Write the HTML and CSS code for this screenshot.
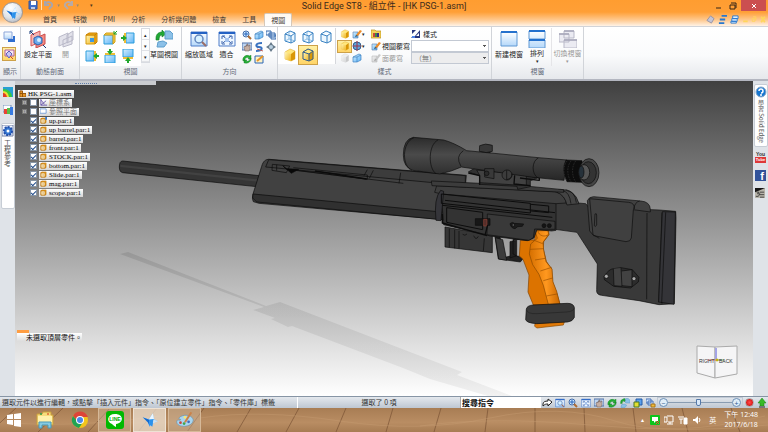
FILE: index.html
```html
<!DOCTYPE html>
<html lang="zh-Hant">
<head>
<meta charset="utf-8">
<title>Solid Edge ST8 - 組立件 - [HK PSG-1.asm]</title>
<link rel="stylesheet" href="styles.css">
</head>
<body>
<svg class="defs" aria-hidden="true">
  <defs>
    <linearGradient id="blue" x1="0" y1="0" x2="1" y2="1"><stop offset="0" stop-color="#d8f0ff"/><stop offset="1" stop-color="#5eb4f6"/></linearGradient>
    <linearGradient id="gold" x1="0" y1="0" x2="1" y2="1"><stop offset="0" stop-color="#fff6b8"/><stop offset="1" stop-color="#f0b41c"/></linearGradient>
    <linearGradient id="win" x1="0" y1="0" x2="0" y2="1"><stop offset="0" stop-color="#fff"/><stop offset="1" stop-color="#b4d8fa"/></linearGradient>
    <linearGradient id="tube" x1="0" y1="0" x2="0" y2="1"><stop offset="0" stop-color="#2b2b2b"/><stop offset=".4" stop-color="#4a4a4a"/><stop offset="1" stop-color="#262626"/></linearGradient>
    <linearGradient id="grip" x1="0" y1="0" x2="1" y2="0"><stop offset="0" stop-color="#d56f00"/><stop offset=".55" stop-color="#ff981f"/><stop offset="1" stop-color="#c86600"/></linearGradient>
    <linearGradient id="fade" gradientUnits="userSpaceOnUse" x1="0" y1="240" x2="0" y2="396"><stop offset="0" stop-color="#000" stop-opacity=".1"/><stop offset="1" stop-color="#000" stop-opacity=".05"/></linearGradient>
    <symbol id="i-view" viewBox="0 0 12 12"><path d="M1 1h8v7H1z" fill="url(#win)" stroke="#8aa4d8"/><path d="M5 8h5V5h2v6H5z" fill="#2e6ed0"/></symbol>
    <symbol id="i-show" viewBox="0 0 12 12"><path d="M2 2h9v6H2z" fill="#f8e6f2" stroke="#b05f96"/><path d="m3 6 3-3 3 3-3 4z" fill="#c9c4f4" stroke="#5f60b8"/><path d="m7 8 3 3" stroke="#d04a2c"/></symbol>
    <symbol id="i-plane" viewBox="0 0 18 18"><path d="m2 5 9-4v11l-9 4z" fill="#f7b5b2" stroke="#d35757"/><path d="m7 8 9-4v10l-9 4z" fill="#f58b82" stroke="#c84c4c"/><path d="m5 8 4-2 4 2v5l-4 2-4-2z" fill="#6aa9ec" stroke="#2b62ae"/><circle cx="10" cy="10" r="2" fill="#d5ecff"/><path d="m1 1 4 4M14 15l3 3M1 4V1h3" stroke="#173b78" fill="none"/></symbol>
    <symbol id="i-open" viewBox="0 0 18 18"><path d="m2 7 9-4v9l-9 4zM6 10l9-4v8l-9 3zM10 5l6-4v9l-6 3z" fill="#e2e2ea" stroke="#b9b9c8"/></symbol>
    <symbol id="i-box" viewBox="0 0 14 14"><path d="M1 4h9v9H1z" fill="url(#blue)" stroke="#2c9ddb"/><path d="m1 4 2-2h9l-2 2zM10 4l2-2v9l-2 2z" fill="#f4cc42" stroke="#d3a01b"/></symbol>
    <symbol id="i-gold" viewBox="0 0 14 14"><path d="M1 4h9v9H1z" fill="url(#gold)" stroke="#d79c11"/><path d="m1 4 3-2h8l-2 2zM10 4l2-2v9l-2 2z" fill="#f4ae1b" stroke="#c98200"/><path d="M5 7h4v4H5z" fill="#3d98e1"/></symbol>
    <symbol id="i-sketch" viewBox="0 0 18 18"><path d="M1 10V8c0-4 3-6 6-6V0l4 4-4 3V5C5 5 4 7 4 10z" fill="#21a735" stroke="#137d25" stroke-width=".6"/><path d="M10 1h5l3 3v5h-8zM3 12l5-1 4 2-3 4H2z" fill="#8cc1e8" stroke="#5f9fcc"/></symbol>
    <symbol id="i-area" viewBox="0 0 18 18"><path d="M1 2h16v14H1z" fill="url(#win)" stroke="#4e7cc8"/><path d="M1 3h16" stroke="#2462c4" stroke-width="2"/><circle cx="9" cy="9" r="4" fill="#d7f1ff" stroke="#6287bf" stroke-width="1.5"/><path d="m12 12 4 4" stroke="#996c66" stroke-width="2"/></symbol>
    <symbol id="i-fit" viewBox="0 0 18 18"><path d="M1 2h16v14H1z" fill="#edf6ff" stroke="#4e7cc8"/><path d="M1 3h16" stroke="#2462c4" stroke-width="2"/><path d="m5 6 8 7m0-7-8 7M4 9V6h3m4 0h3v3M4 11v3h3m4 0h3v-3" fill="none" stroke="#3d65ae"/><path d="M7 8h4v4H7z" fill="#a4c3ef"/></symbol>
    <symbol id="i-zoom" viewBox="0 0 10 10"><circle cx="4" cy="4" r="3" fill="#cfeaff" stroke="#426cab"/><path d="m6 6 3 3" stroke="#ad6d35" stroke-width="2"/><path d="M4 2v4M2 4h4" stroke="#2563bd"/></symbol>
    <symbol id="i-rotate" viewBox="0 0 10 10"><path d="M1 7C0 3 4 0 8 2l1-1v4H6l1-1C4 3 3 4 3 6zM9 4c1 3-3 6-6 5L2 9V6h3L4 7c2 1 4-1 4-2z" fill="#25ae35" stroke="#147c26" stroke-width=".4"/></symbol>
    <symbol id="i-hand" viewBox="0 0 10 10"><path d="M0 1h10v7H0z" fill="#bdd4f0" stroke="#5272a8"/><path d="M3 9 2 5l1-1 1 1V3h1v1-2h1v2h1V3h1v4L7 9z" fill="#c5aea2" stroke="#6b5b58" stroke-width=".5"/></symbol>
    <symbol id="i-layers" viewBox="0 0 10 10"><path d="M0 1h5v4H0zM3 3h6v4H3zM5 5h5v4H5z" fill="#e8f3ff" stroke="#3568ac"/></symbol>
    <symbol id="i-look" viewBox="0 0 10 10"><path d="m5 0 2 3 3 2-3 2-2 3-2-3-3-2 3-2z" fill="#667989"/><circle cx="5" cy="5" r="2" fill="#b9cfdf"/></symbol>
    <symbol id="i-wire" viewBox="0 0 14 14"><path d="m2 4 5-3 5 2v8l-4 2-6-2zM2 4l6 2 4-3M8 6v7" fill="#edf8ff" stroke="#3a82c2"/></symbol>
    <symbol id="i-wire-back" viewBox="0 0 14 14"><use href="#i-wire"/><path d="M6 2v7l-4 2m4-2 6 2" fill="none" stroke="#69a6db" stroke-width=".7"/></symbol>
    <symbol id="i-cube" viewBox="0 0 14 14"><path d="m2 4 5-3 5 2v8l-4 2-6-2z" fill="#ffe77c" stroke="#d9a020" stroke-width=".5"/><path d="m8 6 4-3v8l-4 2z" fill="#d99707"/><path d="m2 4 6 2v7l-6-2z" fill="url(#gold)"/></symbol>
    <symbol id="i-edge" viewBox="0 0 14 14"><use href="#i-cube"/><path d="m2 4 5-3 5 2v8l-4 2-6-2zM2 4l6 2 4-3M8 6v7" fill="none" stroke="#315f91"/></symbol>
    <symbol id="i-globe" viewBox="0 0 10 10"><circle cx="5" cy="5" r="4" fill="#5ca8df" stroke="#34618e"/><path d="M5 0v10M1 5h8" stroke="#9e344b"/></symbol>
    <symbol id="i-brush" viewBox="0 0 10 10"><path d="M1 3h5v6H1z" fill="url(#blue)" stroke="#5579aa" stroke-width=".6"/><path d="m4 6 4-5 2 1-4 5z" fill="#ed8c29"/><path d="m3 8 1-2 2 1z" fill="#345"/></symbol>
    <symbol id="i-persp" viewBox="0 0 10 10"><path d="m1 4 6-3 2 1v5L5 9H1z" fill="url(#blue)" stroke="#3f82c2" stroke-width=".7"/><path d="M1 4h4l4-2M5 4v5" fill="none" stroke="#3f82c2" stroke-width=".7"/></symbol>
    <symbol id="i-colors" viewBox="0 0 10 10"><path d="M0 1h4l1 1h5v7H0z" fill="#f3d35a" stroke="#b98d1b" stroke-width=".7"/><path d="M2 4h2v4H2z" fill="#c8433b"/><path d="M4 4h2v4H4z" fill="#448740"/><path d="M6 4h2v4H6z" fill="#382b88"/></symbol>
    <symbol id="i-style" viewBox="0 0 10 10"><path d="M1 1h4L1 5zM4 7l5-6v8H0l2-2z" fill="#28357c"/><path d="m6 6 2-2v3H5z" fill="#fff"/><path d="M1 7h3v2H1z" fill="#4e83e8"/></symbol>
    <symbol id="i-window" viewBox="0 0 18 18"><path d="M1 2h16v14H1z" fill="url(#win)" stroke="#6099d4"/><path d="M1 2h16" stroke="#2471cd" stroke-width="2"/></symbol>
    <symbol id="i-tile" viewBox="0 0 18 18"><path d="M1 1h16v8H1zM1 10h16v8H1z" fill="url(#win)" stroke="#6099d4"/><path d="M1 1h16M1 10h16" stroke="#2471cd" stroke-width="2"/></symbol>
    <symbol id="i-switch" viewBox="0 0 18 18"><path d="M5 1h10v7H5zM0 4h10v8H0zM5 10h13v8H5z" fill="#ebebf2" stroke="#b9b9c8"/><path d="M5 1h10M0 4h10M5 10h13" stroke="#a7a7b9" stroke-width="1.5"/></symbol>
    <symbol id="i-part" viewBox="0 0 8 8"><path d="M1 2h5v5H1z" fill="#fff3c7" stroke="#b96c00"/><path d="m1 2 1-1h5v5L6 7V2z" fill="#efa624" stroke="#bd7100" stroke-width=".5"/><path d="M3 4h1v1H3z" fill="#a34a00"/></symbol>
    <symbol id="i-mark" viewBox="0 0 32 26"><path d="M3 8l11 4 7-11 2 10 7 4-9 4-6 6-3-8z" fill="#80c6ff"/><path d="m3 8 11 4 2 13-4-8z" fill="#146bd0"/><path d="m14 12 7-11 2 10-6 7z" fill="#e9f5ff"/><path d="m14 12 9-1-3 14-5-4z" fill="#2a91eb"/><path d="m22 12 8 3-9 4z" fill="#d2e0ed"/></symbol>
    <symbol id="i-palette" viewBox="0 0 20 18"><path d="M3 7c4-5 14-4 16 1 1 5-5 8-10 8-6 0-9-3-8-6 1-2 2 0 4-1 1-1-2-1-2-2z" fill="#a9d5ef" stroke="#6991aa" stroke-width=".7"/><circle cx="5" cy="12" r="1.5" fill="#cb443a"/><circle cx="9" cy="13" r="1.5" fill="#41a54a"/><circle cx="14" cy="11" r="1.5" fill="#416bc0"/><circle cx="10" cy="6" r="1.5" fill="#ffe766"/><path d="m9 11 7-11 2 1-7 11z" fill="#cb824a"/></symbol>
  </defs>
</svg>

<header class="titlebar">
  <button class="orb" aria-label="應用程式功能表"><svg viewBox="0 0 32 26"><use href="#i-mark"/></svg></button>
  <div class="caption">
    <div class="quick">
      <button aria-label="儲存"><svg viewBox="0 0 10 10"><path d="M1 1h8v8H1z" fill="#3f6ec8" stroke="#31539d"/><path d="M3 1h5v4H3z" fill="#fff"/><path d="M3 7h4v2H3z" fill="#bdcce9"/></svg></button>
      <button class="undo" aria-label="復原"><svg viewBox="0 0 10 10"><path d="M1 1v4h4M1 5c2-5 8-3 7 1L5 9" fill="none" stroke="#a8a5ac" stroke-width="2"/></svg></button>
      <span>▾</span>
      <button aria-label="重做"><svg viewBox="0 0 10 10"><path d="M9 1v4H5M9 5C7 0 1 2 2 6l3 3" fill="none" stroke="#b8aaa6" stroke-width="2"/></svg></button>
      <span>▾</span><span class="more">▾</span>
    </div>
    <h1>Solid Edge ST8 - 組立件 - [HK PSG-1.asm]</h1>
    <div class="window-buttons">
      <button aria-label="最小化"><svg viewBox="0 0 8 8"><path d="M1 6h5" stroke="#332516"/></svg></button>
      <button aria-label="還原"><svg viewBox="0 0 8 8"><path d="M1 3h5v4H1zM2 1h5v5" fill="none" stroke="#332516"/></svg></button>
      <button class="close" aria-label="關閉"><svg viewBox="0 0 8 8"><path d="m2 2 4 4m0-4L2 6" stroke="#fff"/></svg></button>
    </div>
  </div>
  <nav class="tabs">
    <a href="#">首頁</a><a href="#">特徵</a><a href="#">PMI</a><a href="#">分析</a><a href="#">分析幾何體</a><a href="#">檢查</a><a href="#">工具</a><a class="active" href="#">視圖</a>
    <div class="doc-buttons">
      <svg viewBox="0 0 10 10"><path d="m1 6 4-5 4 3-3 5z" fill="#c4c4d5" stroke="#9292a8"/></svg>
      <svg viewBox="0 0 10 10"><path d="M4 1h6M2 5h6M1 9h6" stroke="#2878cf" stroke-width="2"/></svg>
      <svg viewBox="0 0 10 10"><path d="M3 1h6v3H3zM2 4h6v3H2zM1 7h6v2H1z" fill="#dceeff" stroke="#2878cf"/></svg>
      <svg class="slim" viewBox="0 0 6 10"><path d="M1 7h5" stroke="#ffd65c" stroke-width="2"/></svg>
      <svg class="slim" viewBox="0 0 6 10"><path d="M1 4h3v3H1zM2 2h3v4" fill="none" stroke="#ffd65c"/></svg>
      <svg class="slim" viewBox="0 0 6 10"><path d="m1 2 4 6m0-6L1 8" stroke="#ffd65c" stroke-width="2"/></svg>
    </div>
  </nav>
</header>

<section class="ribbon" aria-label="視圖">
  <div class="group g-show">
    <div class="tools stack">
      <button class="mini" aria-label="視圖"><svg><use href="#i-view"/></svg></button>
      <button class="mini chosen" aria-label="顯示"><svg><use href="#i-show"/></svg></button>
    </div>
    <h2>顯示</h2>
  </div>
  <div class="group g-section">
    <div class="tools">
      <button class="big"><svg><use href="#i-plane"/></svg>設定平面</button>
      <button class="big off"><svg><use href="#i-open"/></svg>開</button>
    </div>
    <h2>動態剖面</h2>
  </div>
  <div class="group g-views">
    <div class="tools">
      <div class="gallery">
        <button aria-label="等角視圖"><svg viewBox="0 0 14 14"><use href="#i-gold"/></svg></button>
        <button aria-label="俯視圖"><svg viewBox="0 0 14 14"><path d="M1 4h9v9H1z" fill="url(#blue)" stroke="#2c9ddb"/><path d="m1 4 2-2h9l-2 2zM10 4l2-2v9l-2 2z" fill="#f4cc42" stroke="#d3a01b"/><path d="m14 0-3 3m0-3v3h3" stroke="#22a82e" fill="none"/></svg></button>
        <button aria-label="左視圖"><svg viewBox="0 0 14 14"><path d="M5 2h8v10H5z" fill="url(#blue)" stroke="#2c9ddb"/><path d="M4 2v10" stroke="#efbd36" stroke-width="2"/><path d="M0 6h2V4l4 3-4 3V8H0z" fill="#22a82e"/></svg></button>
        <button aria-label="右視圖"><svg viewBox="0 0 14 14"><path d="M1 2h8v10H1z" fill="url(#blue)" stroke="#2c9ddb"/><path d="M10 2v10" stroke="#efbd36" stroke-width="2"/><path d="M14 6h-2V4L8 7l4 3V8h2z" fill="#22a82e"/></svg></button>
        <button aria-label="前視圖"><svg viewBox="0 0 14 14"><path d="M2 6h10v8H2z" fill="url(#blue)" stroke="#2c9ddb"/><path d="M2 5h10" stroke="#efbd36" stroke-width="2"/><path d="M6 0h2v2h2L7 6 4 2h2z" fill="#22a82e"/></svg></button>
        <button aria-label="底視圖"><svg viewBox="0 0 14 14"><path d="M2 0h10v8H2z" fill="url(#blue)" stroke="#2c9ddb"/><path d="M2 9h10" stroke="#efbd36" stroke-width="2"/><path d="m7 8 3 4H8v2H6v-2H4z" fill="#22a82e"/></svg></button>
      </div>
      <div class="scroller"><button aria-label="上一列">▴</button><button aria-label="下一列">▾</button><button aria-label="更多">▾</button></div>
      <button class="big"><svg><use href="#i-sketch"/></svg>草圖視圖</button>
    </div>
    <h2>視圖</h2>
  </div>
  <div class="group g-orient">
    <div class="tools">
      <button class="big"><svg><use href="#i-area"/></svg>縮放區域</button>
      <button class="big"><svg><use href="#i-fit"/></svg>適合</button>
      <div class="small-grid">
        <button aria-label="縮放"><svg><use href="#i-zoom"/></svg></button>
        <button aria-label="塗彩"><svg><use href="#i-persp"/></svg></button>
        <button aria-label="視圖方向"><svg><use href="#i-layers"/></svg></button>
        <button aria-label="平移"><svg><use href="#i-hand"/></svg></button>
        <button aria-label="上一視圖"><svg viewBox="0 0 10 10"><path d="M8 1C1 1 1 5 5 5s4 4-3 4" fill="none" stroke="#3972c0" stroke-width="2"/><path d="m3 7 6 2" stroke="#bd6260"/></svg></button>
        <button aria-label="正視面"><svg><use href="#i-look"/></svg></button>
        <button aria-label="旋轉"><svg><use href="#i-rotate"/></svg></button>
        <button aria-label="儲存視圖"><svg viewBox="0 0 10 10"><path d="M1 2h8v7H1z" fill="#fff2c4" stroke="#2b66b8"/><path d="m3 7 6-5" stroke="#e89526" stroke-width="2"/></svg></button>
      </div>
    </div>
    <h2>方向</h2>
  </div>
  <div class="group g-style">
    <div class="tools">
      <div class="cubes">
        <button aria-label="線框"><svg><use href="#i-wire-back"/></svg></button>
        <button aria-label="隱藏邊線"><svg><use href="#i-wire-back"/></svg></button>
        <button aria-label="可見邊線"><svg><use href="#i-wire"/></svg></button>
        <button aria-label="塗彩"><svg><use href="#i-cube"/></svg></button>
        <button class="chosen" aria-label="帶邊線塗彩"><svg><use href="#i-edge"/></svg></button>
      </div>
      <div class="render">
        <button aria-label="陰影"><svg><use href="#i-cube"/></svg></button>
        <button aria-label="邊線色彩"><svg><use href="#i-brush"/></svg></button><i>▾</i>
        <button class="wide" aria-label="色彩管理"><svg><use href="#i-colors"/></svg></button>
        <button class="chosen" aria-label="落影"><svg><use href="#i-cube"/></svg></button>
        <button aria-label="銳化"><svg><use href="#i-globe"/></svg></button><i>▾</i>
        <button class="wide"><svg><use href="#i-brush"/></svg>視圖覆寫</button>
        <button class="gray" aria-label="反射"><svg><use href="#i-cube"/></svg></button>
        <button aria-label="透視"><svg><use href="#i-persp"/></svg></button><i></i>
        <button class="wide off"><svg class="gray"><use href="#i-brush"/></svg>面覆寫</button>
      </div>
      <div class="style-fields">
        <label for="style"><svg><use href="#i-style"/></svg>樣式</label>
        <select id="style"><option></option></select>
        <select aria-label="面覆寫" disabled><option>（無）</option></select>
      </div>
    </div>
    <h2>樣式</h2>
  </div>
  <div class="group g-window">
    <div class="tools">
      <button class="big"><svg><use href="#i-window"/></svg>新建視窗</button>
      <button class="big drop"><svg><use href="#i-tile"/></svg>排列<i>▾</i></button>
      <button class="big drop off"><svg><use href="#i-switch"/></svg>切換視窗<i>▾</i></button>
    </div>
    <h2>視窗</h2>
  </div>
</section>

<main class="workspace">
  <aside class="rail left">
    <button aria-label="色彩"><svg viewBox="0 0 10 10"><path d="M0 0h10v10H0z" fill="#279fd2"/><path d="M0 2q8 0 9 8H0z" fill="#39ca3d"/><path d="M0 4q5 0 6 6H0z" fill="#f2db37"/><path d="M0 6q3 0 4 4H0z" fill="#df3c28"/></svg></button>
    <button aria-label="模擬"><svg viewBox="0 0 10 10"><path d="M0 0h8v7H0z" fill="#fff" stroke="#7290ba"/><path d="M1 4h3v5H1z" fill="#ea4435"/><path d="M4 3h3v6H4z" fill="#5abf4a"/><path d="M7 2h3v8H7z" fill="#387be0"/></svg></button>
    <button class="side-tab"><svg viewBox="0 0 12 12"><path d="M0 0h11v11H0z" fill="#f0f5ff" stroke="#6f7fa4"/><circle cx="6" cy="6" r="4" fill="#3478d3" stroke="#214eaa" stroke-width="2" stroke-dasharray="2 1"/><circle cx="6" cy="6" r="1.5" fill="#fff"/></svg><span>工程參考</span></button>
  </aside>

  <section class="viewport" aria-label="HK PSG-1 模型">
    <svg class="model" viewBox="15 81 738 315" preserveAspectRatio="xMidYMid slice">
      <path d="M120 254l8-2 138 54 14-4 182 70-5 3 55 21h-24l-58-17-27-11-111-42-4 1-17-8 4-1-22-8 11-3z" fill="url(#fade)"/>
      <g transform="translate(110 125) scale(.33333)" stroke="#0b0b0b" stroke-width="2" stroke-linejoin="round">
        <path d="M28 126q0-18 10-18l410 44-8 33-402-42q-10-2-10-17z" fill="#353535"/>
        <path d="M31 119l411 44v7L31 126z" fill="#424242" stroke="none"/>
        <path d="M455 124c4-15 12-22 24-21l590 48-12 138-610-54-17-5q-5-9-1-23z" fill="#414141"/>
        <path d="M429 207l629 60v23L440 231l-12-12z" fill="#303030"/>
        <path d="M476 104l590 48v30L467 126z" fill="#3c3c3c"/>
        <path d="M487 118l52 5-10 20-43-7zM500 119v18M518 121l12 12 350 42M550 128l222 22v13l-226-29M772 134l-10 18M790 136l-12 24M872 143l-5 32" fill="none"/>
        <path d="M520 124l8 7 38 2-22 12z" fill="#080808"/>
        <path d="M615 138l155 24" stroke-width="4"/>
      </g>
      <g transform="translate(380 125) scale(.33333)" stroke="#0c0c0c" stroke-width="2" stroke-linejoin="round">
        <path d="M195 306l142 25v52l-142-17z" fill="#363636"/>
        <path d="M224 314v56M237 318v53M208 311v56M248 328q7 6 13-1m20 5q7 16 14 2M313 340l-3 38" fill="none"/>
        <path d="M345 334l10 68 66 9 13-16-29-2-3-48 18-2-1-10-18-4-6 63-16 4-8-4-11-56z" fill="#222"/>
        <path d="M346 338l10 64 24 4-12-62z" fill="#3c3c3c"/>
        <path d="M390 350l20-4v46l-20 7z" fill="#202020"/><path d="M399 349v38l17 9" fill="none"/>
        <path d="M421 346l43-1 2-29 39-2 2 15-16 21-1 21 9 38 16 23 2 37 12 31 12 41-81-1-16-39 3-51-18-47-11-10z" fill="#dc7300" stroke="#814100"/>
        <path d="M465 317h39l2 11-17 24 2 24 7 34 18 22 3 39 11 28 10 39h-35l-15-57-13-33-19-29-10-32 4-30 20-17z" fill="url(#grip)" stroke="#8a4900"/>
        <path d="M457 344l31 12M450 373l42-2M465 405l31-5M481 438l34-11M490 467l28-8M499 513l32-6M474 318c1 14 22 21 32 9" fill="none" stroke="#984f00"/>
        <path d="M465 596l89-8-4 12-79 9-7-5z" fill="#e17a08" stroke="#8a4900"/>
        <path d="M439 552q2-10 20-12l103-5q18 0 21 12v30q-4 12-20 14l-93 5q-30-2-33-12z" fill="#383838"/>
        <path d="M440 555q2 12 30 11l90-5q20-2 23-11" fill="none" stroke-width="1"/>
        <path d="M525 228l92 8 10 11 210 8 50 4 1 20-5 257-46 3-60-12-112-16q-17-2-15-17l2-77-61-95-66-9z" fill="#393939"/>
        <path d="M801 264l-1 259M846 263l-10 269M856 263l-10 273M873 268l-7 267" fill="none"/>
        <path d="M847 260l39 1v13l-4 257v7l-46-7z" fill="#343438"/><path d="M857 262l-12 272" fill="none"/>
        <path d="M622 227q5-12 19-12l141 13q28 2 29 25v8l-51-7-6 85q-2 11-16 11l-97-18-12-14z" fill="#404040"/>
        <path d="M628 221l118 11q19 2 17 20M779 228q-15 3-18 25M629 222l10 107 19 11M645 267q5-3 5 3v30q-4 8-7 2z" fill="none"/>
        <path d="M672 454q15-22 28-23l23-3 34 6 20 23-2 14-23 18-51-5-28-20z" fill="#2c2c2c"/>
        <path d="M700 431l2 51 24 2-3-55M725 438l31-4v51l-30-3" fill="#424242"/>
        <circle cx="679" cy="454" r="6" fill="#aaa"/><circle cx="762" cy="461" r="6" fill="#aaa"/>
        <path d="M187 199l341-3v120l-13 2-44-4-9 25-20 8-112-14-15-5-124-29q-6-52-4-100z" fill="#333"/>
        <path d="M170 182l355 18q28 7 34 34l-31 2-344-29-20-5z" fill="#3e3e3e"/>
        <path d="M535 194q50-4 62 42l-36 4q-7-30-30-38z" fill="#444"/>
        <path d="M548 197q20 3 25 39M557 194q28 4 32 39" fill="none"/>
        <path d="M168 286q-7-66 14-90l9 3-8 88z" fill="#35353a"/>
        <path d="M154 168l250 12 147 14v8l-395-20z" fill="#3c3c3c"/>
        <path d="M184 207l267 28v29l-267-29zM453 238l53 5v20l-53-5M187 241l330 36M195 226l330 37M200 248l108 14v52l-108-22z" fill="none" stroke-width="3"/>
        <path d="M322 267l203 22v24l-61-1-4 26-13 8-126-17z" fill="#393939"/>
        <path d="M286 281h44v20h-44z" fill="#171717"/><path d="M311 283h10v20h-10z" fill="#562e2a" stroke="#8e4438"/>
        <path d="M390 296q8-7 13-1l28 2-4 7-14 1-8 6q-12-1-15-15z" fill="#1c1c1c"/><circle cx="400" cy="300" r="4" fill="#555"/>
        <circle cx="492" cy="302" r="6" fill="#151515"/><circle cx="508" cy="302" r="6" fill="#151515"/>
        <path d="M187 267v27l134 38M323 300l-8 31" fill="none" stroke-width="4"/>
        <path d="M265 141l25-15 148 14 40 17-27 10v18l-38 8-2-9-113-6 1-26z" fill="#313131"/>
        <path d="M290 135l149 14v33l-140-9-1-24z" fill="#414141"/>
        <path d="M265 144l34 8v28M404 151l-2 26 49 5M418 148l60 10v8l-58-7" fill="none" stroke-width="4"/>
        <path d="M306 76h24v17h-24z" fill="#2d2d2d"/><path d="M299 62q17-9 38-1v18q-18 8-39 0z" fill="#383838"/>
        <path d="M70 90q0-47 30-53l91 8q30 8 69 32l215 21 85 7-8 61-93-9-215-31q-30 14-65 21l-80-11q-29-9-29-46z" fill="url(#tube)"/>
        <path d="M314 131h28v30l-28-5z" fill="#393939"/><circle cx="320" cy="145" r="7" fill="#292929"/><circle cx="381" cy="150" r="15" fill="#3c3c3c"/><path d="M380 136v28q17-4 16-18" fill="none"/>
        <path d="M102 38C64 52 66 126 96 136M174 45c-30 14-30 85-6 101M250 77q-25 17-7 47M475 99c-20 8-22 50 1 61" fill="none"/>
        <path d="M558 105l48 2v65l-45-2q-18-35-3-65z" fill="#0c0c0c"/><path d="M561 108c-14 18-11 45 0 60M573 108c-15 19-11 47 1 63M587 108c-14 18-11 49 1 64" fill="none" stroke="#343434" stroke-dasharray="5 3"/>
        <ellipse cx="627" cy="143" rx="30" ry="42" fill="#454545"/><ellipse cx="625" cy="143" rx="24" ry="33" fill="#333"/><ellipse cx="612" cy="142" rx="17" ry="23" fill="#565656"/><ellipse cx="604" cy="141" rx="8" ry="18" fill="#26313a"/>
      </g>
      <g stroke="#aaa" fill="#f5f5f6"><path d="M697 346l18 1v31l-18-5z"/><path d="M715 347l22-1v28l-22 4z"/><path d="M716 348v11" stroke="#a3a4e6" stroke-width="2"/><path d="M707 360h9" stroke="#dd7771"/><path d="M717 360h7" stroke="#73aa6b"/><circle cx="717" cy="360" r="1" fill="#d4ba00" stroke="#bda900"/></g>
      <g class="cube-labels"><text x="699" y="363">RIGHT</text><text x="719" y="363">BACK</text></g>
    </svg>
    <div class="handle"><span></span></div>
    <div class="overlay">
      <ul class="tree">
        <li class="root"><span class="node"><svg viewBox="0 0 8 8"><path d="M1 1h3v3h4v4H1z" fill="#e4992c" stroke="#8f4c00"/><path d="M1 4h3v4" stroke="#8f4c00" fill="none"/></svg>HK PSG-1.asm</span></li>
        <li><button aria-label="展開座標系">+</button><input id="t1" type="checkbox"><label class="node off" for="t1"><svg viewBox="0 0 8 8"><path d="M1 0v7h7M1 7l6-5M1 1l4 5" fill="none" stroke="#6754ab"/></svg>座標系</label></li>
        <li><button aria-label="展開參照平面">+</button><input id="t2" type="checkbox"><label class="node off" for="t2"><svg viewBox="0 0 8 8"><path d="M0 1h7v5H0z" fill="#fff" stroke="#709bd7"/></svg>參照平面</label></li>
        <li><input id="t3" type="checkbox" checked><label class="node" for="t3"><svg viewBox="0 0 8 8"><use href="#i-part"/><path d="M6 0h2v3H6z" fill="#357bd3"/></svg>up.par:1</label></li>
        <li><input id="t4" type="checkbox" checked><label class="node" for="t4"><svg><use href="#i-part"/></svg>up barrel.par:1</label></li>
        <li><input id="t5" type="checkbox" checked><label class="node" for="t5"><svg><use href="#i-part"/></svg>barrel.par:1</label></li>
        <li><input id="t6" type="checkbox" checked><label class="node" for="t6"><svg><use href="#i-part"/></svg>front.par:1</label></li>
        <li><input id="t7" type="checkbox" checked><label class="node" for="t7"><svg><use href="#i-part"/></svg>STOCK.par:1</label></li>
        <li><input id="t8" type="checkbox" checked><label class="node" for="t8"><svg><use href="#i-part"/></svg>bottom.par:1</label></li>
        <li><input id="t9" type="checkbox" checked><label class="node" for="t9"><svg><use href="#i-part"/></svg>Slide.par:1</label></li>
        <li><input id="t10" type="checkbox" checked><label class="node" for="t10"><svg><use href="#i-part"/></svg>mag.par:1</label></li>
        <li><input id="t11" type="checkbox" checked><label class="node" for="t11"><svg><use href="#i-part"/></svg>scope.par:1</label></li>
      </ul>
      <p class="prompt">未選取頂層零件。</p>
    </div>
  </section>

  <aside class="rail right">
    <button class="side-tab"><svg viewBox="0 0 12 12"><circle cx="6" cy="6" r="5" fill="#1676d0" stroke="#8aaacb"/><path d="M4 5q0-2 2-2t2 2-2 2M6 8v2" fill="none" stroke="#fff" stroke-width="1.5"/></svg><span>學習 Solid Edge</span></button>
    <a class="youtube" href="#"><span>You</span><b>Tube</b></a>
    <a class="facebook" href="#">f</a>
    <a class="siemens" href="#" aria-label="社群"><svg viewBox="0 0 12 12"><path d="M0 0h12v12H0z" fill="#b8b5ab"/><path d="M0 0h12L0 5z" fill="#151515"/><path d="M2 5h3L3 7h3L4 10H1M6 5h5M6 8h5M6 11h5" fill="none" stroke="#333"/></svg></a>
  </aside>
</main>

<footer class="status">
  <p class="hint">選取元件以進行編輯，或點擊「插入元件」指令、「原位建立零件」指令、「零件庫」標籤</p>
  <p class="count">選取了 0 項</p>
  <input class="search" type="text" value="搜尋指令" aria-label="搜尋指令">
  <div class="status-tools">
    <button aria-label="重複"><svg viewBox="0 0 10 10"><path d="M1 8V6c0-2 2-3 5-3V1l4 3-4 4V6C4 6 3 6 1 8z" fill="#fff" stroke="#222"/></svg></button>
    <button aria-label="縮放區域"><svg viewBox="0 0 18 18"><use href="#i-area"/></svg></button>
    <button aria-label="縮放"><svg><use href="#i-zoom"/></svg></button>
    <button aria-label="適合"><svg viewBox="0 0 18 18"><use href="#i-fit"/></svg></button>
    <button aria-label="平移"><svg><use href="#i-hand"/></svg></button>
    <button aria-label="旋轉"><svg><use href="#i-rotate"/></svg></button>
    <button aria-label="草圖視圖"><svg viewBox="0 0 18 18"><use href="#i-sketch"/></svg></button>
    <button aria-label="視圖樣式"><svg viewBox="0 0 10 10"><path d="M3 1h6v6H3z" fill="#5ba0eb" stroke="#225aa8"/><path d="M1 4h5v5H1z" fill="#e2df31" stroke="#4b7628"/></svg></button>
    <button aria-label="視窗"><svg viewBox="0 0 10 10"><path d="M0 1h5v4H0zM2 3h5v4H2z" fill="#d6e8ff" stroke="#4470b6"/><path d="M5 6h4v3H5z" fill="#f0bb38" stroke="#a67319"/></svg></button>
  </div>
  <div class="zoombar"><button aria-label="縮小">−</button><input type="range" min="0" max="100" value="48" aria-label="縮放比例"><button aria-label="放大">+</button></div>
  <button class="record" aria-label="錄製"></button>
  <button class="upload" aria-label="上傳"><svg viewBox="0 0 10 10"><path d="m5 0 4 5H7v3H3V5H1z" fill="#38ba29" stroke="#17800e" stroke-width=".5"/><path d="M2 9h6" stroke="#777" stroke-width="2"/></svg></button>
</footer>

<nav class="taskbar" aria-label="工作列">
  <svg class="wood" viewBox="0 0 768 24" preserveAspectRatio="none"><path d="M16 0-10 24M63 0 38 24M110 0 88 24M157 0l-19 24M204 0l-17 24M251 0l-14 24M299 0l-13 24M346 0l-10 24M393 0l-7 24M441 0l-7 24M488 0l-3 24M535 0v24M584 0l1 24M633 0l3 24M682 0l6 24M731 0l9 24" stroke="#765032" stroke-opacity=".65"/><path d="M200 10q60-9 140 3t150-3 125 3 150-5M420 18q70-10 170-1t178 0M10 15q70 5 150-7" stroke="#c69c72" stroke-opacity=".45" fill="none"/></svg>
  <button class="task start" aria-label="開始"><svg viewBox="0 0 14 14"><path d="m0 2 6-1v5H0zM7 1l7-1v6H7zM0 7h6v5l-6-1zM7 7h7v7l-7-1z" fill="#fff"/></svg></button>
  <button class="task folder" aria-label="檔案總管"><svg viewBox="0 0 18 18"><path d="M1 3h5l1-2h8v3h2v10H1z" fill="#f7dc7c" stroke="#c99e3b"/><path d="M2 5h14v6H2z" fill="#fff1ad"/><path d="M3 17v-6h12v6h-3v-3H6v3z" fill="#86cae2" stroke="#4999b9"/><circle cx="5" cy="3" r="1" fill="#30a14b"/><circle cx="12" cy="3" r="1" fill="#e26937"/></svg></button>
  <button class="task chrome" aria-label="Chrome"><svg viewBox="0 0 18 18"><circle cx="9" cy="9" r="8" fill="#f3c51b"/><path d="M2 5C5-1 14-1 17 6H9L6 10z" fill="#dd4438"/><path d="M2 5c-3 5 0 11 6 12l4-6H7z" fill="#20a353"/><circle cx="9" cy="9" r="4" fill="#fff"/><circle cx="9" cy="9" r="3" fill="#4a88e8"/></svg></button>
  <button class="task framed" aria-label="LINE"><svg viewBox="0 0 18 18"><rect width="18" height="18" rx="3" fill="#00b900"/><path d="M9 3c9 0 9 9 1 10v3c-2-1-3-2-4-3C0 11 1 3 9 3z" fill="#fff"/><text x="9" y="10">LINE</text></svg></button>
  <button class="task framed current" aria-label="Solid Edge"><svg viewBox="0 0 32 26"><use href="#i-mark"/></svg></button>
  <button class="task framed" aria-label="小畫家"><svg viewBox="0 0 20 18"><use href="#i-palette"/></svg></button>
  <div class="tray">
    <button class="up" aria-label="顯示隱藏的圖示">▴</button>
    <svg viewBox="0 0 10 10"><rect width="10" height="10" rx="1" fill="#0bc51c"/><path d="M2 2h6v4H6L4 8V6H2z" fill="#fff"/><path d="m6 6 3 3m0-3L6 9" stroke="#e94a35"/></svg>
    <svg viewBox="0 0 10 10"><path d="M3 1h6v6H4M6 7v2m-3 0h6M0 2h3v5H0z" fill="none" stroke="#fff"/></svg>
    <svg viewBox="0 0 10 10"><path d="M0 2h6M1 4h4M3 4v5" stroke="#fff" fill="none"/><path d="M6 3h3v6H6z" fill="#fff" stroke="#fff"/></svg>
    <svg viewBox="0 0 10 10"><path d="M1 4h2l3-3v8L3 6H1z" fill="#fff"/><path d="M7 3q2 2 0 4" fill="none" stroke="#fff"/></svg>
    <span class="ime">英</span>
    <time datetime="2017-06-18T12:48">下午 12:48<br>2017/6/18</time>
  </div>
</nav>
</body>
</html>
```
FILE: styles.css
```css
* { box-sizing: border-box; }
body {
  margin: 0; height: 100vh; overflow: hidden;
  display: flex; flex-direction: column;
  font: 7px/8px "Noto Sans CJK TC", "Liberation Sans", sans-serif;
  color: #222; background: #dfe3e8;
}
button { font: inherit; color: inherit; padding: 0; margin: 0; border: 0; background: none; }
a { color: inherit; text-decoration: none; }
h1, h2, p, ul { margin: 0; padding: 0; font-weight: normal; }
svg { display: block; }
i { font-style: normal; font-size: 5px; }
.defs { position: absolute; width: 0; height: 0; }

.titlebar { position: relative; flex: none; background: linear-gradient(#ff9d30 0, #ff9f36 12px, #ffc98f 20px, #fff3e7 26px); }
.orb {
  position: absolute; left: 2px; top: 2px; width: 21px; height: 21px; z-index: 2;
  border-radius: 50%; border: 1px solid #98979b;
  background: radial-gradient(circle at 40% 25%, #fff, #dfe2e7 55%, #9ea4ad);
}
.orb svg { width: 16px; height: 14px; margin: auto; }
.caption { display: grid; grid-template-columns: 1fr auto 1fr; height: 13px; }
.quick { display: flex; align-items: center; height: 10px; padding-left: 28px; gap: 3px; color: #9c8b7b; font-size: 5px; }
.quick svg { width: 10px; height: 10px; }
.undo { border-left: 1px solid #ffe0b8; padding-left: 2px; }
.more { color: #4e351a; padding-left: 8px; }
h1 { font: 9px/13px Roboto, "Noto Sans CJK TC", sans-serif; color: #3b2b1b; white-space: nowrap; }
.window-buttons { display: flex; justify-content: flex-end; padding-right: 2px; gap: 2px; }
.window-buttons button { width: 12px; height: 11px; display: grid; place-items: center; }
.window-buttons svg { width: 8px; height: 8px; }
.window-buttons .close { width: 25px; background: #cb4f50; }
.tabs { display: flex; height: 13px; padding-left: 35px; align-items: stretch; }
.tabs a { padding: 0 8px; line-height: 13px; color: #433a35; }
.tabs .active { background: linear-gradient(#fff8f0, #fff); border: 1px solid #d6c8b9; border-bottom: 0; border-radius: 2px 2px 0 0; padding: 0 6px; }
.doc-buttons { margin-left: auto; display: flex; gap: 3px; align-items: center; padding-right: 2px; }
.doc-buttons svg { width: 9px; height: 9px; }
.doc-buttons .slim { width: 6px; }

.ribbon { flex: none; display: flex; height: 55px; border-top: 1px solid #d2d4d8; border-bottom: 2px solid #b3b6c0; background: linear-gradient(#fff, #fafbfc 55%, #e6e8ec); }
.group { display: flex; flex-direction: column; border-right: 1px solid #d1d4d9; }
.tools { display: flex; height: 39px; padding-top: 1px; }
.group h2 { font-size: 7px; line-height: 11px; text-align: center; color: #626978; }
.chosen { background: linear-gradient(#fff0a3, #ffd467); outline: 1px solid #cda149; }
.off { color: #999; }
.gray { filter: grayscale(1); opacity: .5; }
.big { width: 28px; display: flex; flex-direction: column; align-items: center; white-space: nowrap; padding-top: 2px; gap: 2px; }
.big svg { width: 18px; height: 18px; flex: none; }
.big i { line-height: 6px; }
.g-show { width: 21px; }
.stack { flex-direction: column; gap: 5px; padding: 4px 0 0 3px; }
.mini { width: 12px; height: 12px; }
.mini svg { width: 12px; height: 12px; }
.g-section { width: 59px; }
.g-section .tools { padding-left: 3px; }
.g-views { width: 102px; }
.gallery { width: 61px; display: grid; grid-template-columns: repeat(3, 18px); grid-auto-rows: 18px; padding: 1px 0 0 3px; background: #fff; }
.gallery svg { width: 14px; height: 14px; margin: auto; }
.scroller { width: 9px; height: 35px; border: 1px solid #d8dbe1; display: flex; flex-direction: column; }
.scroller button { flex: 1; font-size: 5px; line-height: 5px; border-bottom: 1px solid #e0e2e6; }
.g-orient { width: 96px; }
.g-orient .tools { padding-left: 3px; }
.small-grid { display: grid; grid-template-columns: repeat(3, 12px); grid-auto-rows: 12px; padding: 1px 0 0 1px; }
.small-grid svg { width: 10px; height: 10px; margin: auto; }
.g-style { width: 214px; }
.cubes { width: 58px; height: 36px; display: grid; grid-template-columns: repeat(3, 18px); grid-auto-rows: 18px; padding-left: 3px; background: #fff; border-right: 1px solid #d5d7dc; }
.cubes svg { width: 14px; height: 14px; margin: auto; }
.render { display: grid; grid-template-columns: 13px 11px 7px auto; grid-auto-rows: 12px; align-items: center; padding-left: 2px; width: 75px; }
.render button { display: flex; align-items: center; height: 11px; justify-content: center; white-space: nowrap; }
.render svg { width: 10px; height: 10px; flex: none; }
.render .wide { justify-content: flex-start; gap: 1px; padding-left: 2px; }
.style-fields { display: flex; flex-direction: column; width: 78px; }
.style-fields label { display: flex; gap: 2px; height: 12px; align-items: center; }
.style-fields svg { width: 10px; height: 10px; }
select {
  appearance: none; width: 78px; height: 12px; padding: 0 3px; margin: 0; border: 1px solid #c3c9d3; border-radius: 0;
  font: inherit; color: #333; background-color: #fff;
  background-image: linear-gradient(#555, #555), linear-gradient(#555, #555);
  background-position: 71px 4px, 72px 5px; background-size: 3px 1px, 1px 1px; background-repeat: no-repeat;
}
select:disabled { background-color: #ededee; color: #777; opacity: 1; }
.g-window { width: 92px; }
.g-window .tools { padding-left: 3px; }
.g-window .drop { gap: 1px; }
.g-window .drop + .drop { border-left: 1px solid #e5e5e8; width: 32px; }

.workspace { flex: 1; min-height: 0; display: flex; }
.rail { width: 15px; flex: none; background: #dfe3e8; display: flex; flex-direction: column; align-items: center; }
.rail svg { width: 10px; height: 10px; }
.left { padding-top: 6px; gap: 8px; }
.side-tab { width: 14px; background: #fff; border: 1px solid #c7cdd5; border-radius: 2px; display: flex; flex-direction: column; align-items: center; gap: 2px; padding-top: 1px; }
.side-tab span { writing-mode: vertical-rl; color: #555; line-height: 10px; white-space: nowrap; }
.left .side-tab { height: 86px; }
.left .side-tab svg, .right .side-tab svg { width: 12px; height: 12px; flex: none; }
.right { padding-top: 3px; }
.right .side-tab { height: 63px; margin-bottom: 5px; font-size: 6px; }
.right a { display: block; width: 11px; height: 11px; margin-bottom: 7px; }
.right .youtube { font: bold 5px/5px "Liberation Sans", sans-serif; text-align: center; color: #333; }
.youtube span { display: block; }
.youtube b { display: block; background: #de3939; color: #fff; line-height: 6px; font-size: 4px; }
.right .facebook { background: #31529a; color: #fff; font: bold 11px/13px "Liberation Sans", sans-serif; text-align: right; padding-right: 2px; }

.viewport { position: relative; flex: 1; min-width: 0; overflow: hidden; background: linear-gradient(#404040, #9f9f9f 50%, #d8d8d8 80%, #fff); }
.model { position: absolute; inset: 0; width: 100%; height: 100%; }
.cube-labels { font: 5px "Liberation Sans", sans-serif; fill: #333; }
.handle { position: relative; width: 141px; height: 4px; background: #c9cbcf; display: flex; justify-content: center; align-items: center; }
.handle span { width: 22px; border-top: 1px dotted #607eaa; }
.overlay { position: absolute; inset: 8px auto 55px 2px; display: flex; flex-direction: column; justify-content: space-between; align-items: flex-start; }
.tree { list-style: none; font: 7px/8px "Liberation Serif", "Noto Sans CJK TC", serif; color: #000; }
.tree li { display: flex; height: 9px; align-items: center; justify-content: flex-start; padding-left: 13px; position: relative; }
.tree .root { padding-left: 1px; }
.node { display: flex; align-items: center; height: 8px; gap: 2px; padding: 0 2px 0 1px; background: linear-gradient(#fff, #d5d5d5); white-space: nowrap; }
.node svg { width: 7px; height: 7px; flex: none; }
.node.off { color: #777; }
.tree button { width: 5px; height: 5px; margin: 0 3px 0 -8px; font-size: 5px; line-height: 3px; border: 1px solid #777; background: #aaa; }
.tree input { appearance: none; width: 7px; height: 7px; margin: 0 2px 0 0; border: 1px solid #8796a7; background: #fff; display: grid; place-items: center; }
.tree input:checked::after { content: ""; width: 4px; height: 2px; border: solid #214c8b; border-width: 0 0 1px 1px; transform: rotate(-45deg); }
.prompt { border-top: 3px solid transparent; color: #111; padding: 0 0 0 9px; height: 11px; width: 65px; white-space: nowrap; background: linear-gradient(#ff9d42, #ff9d42) 0 0 / 12px 3px no-repeat border-box, linear-gradient(#fff, #ddd) padding-box; }

.status { flex: none; height: 12px; display: flex; align-items: stretch; border-top: 1px solid #8795a5; background: linear-gradient(#e4e8ed, #bec7d2); color: #333; line-height: 11px; }
.hint { flex: 299 1 0; padding-left: 2px; white-space: nowrap; border-right: 1px solid #fff; }
.count { flex: 164 1 0; text-align: center; }
.search { flex: 79 1 0; min-width: 0; border: 0; border-left: 1px solid #aaa; border-radius: 0; background: #fff; font: bold 8px/11px "Noto Sans CJK TC", sans-serif; color: #111; padding: 0 1px; }
.status-tools { display: flex; align-items: center; gap: 3px; padding: 0 1px; }
.status-tools button, .status-tools svg { width: 10px; height: 10px; }
.zoombar { display: flex; align-items: center; width: 86px; border: 1px solid #c1cad6; padding: 0 1px; }
.zoombar button { width: 9px; height: 9px; line-height: 6px; border: 1px solid #6c8fb5; border-radius: 50%; background: #e0edf8; color: #2f5c93; }
.zoombar input { appearance: none; flex: 1; min-width: 0; height: 9px; margin: 0; background: linear-gradient(#899cb1, #899cb1) 0 4px / 100% 1px no-repeat; }
.zoombar input::-webkit-slider-thumb { appearance: none; width: 5px; height: 7px; border: 1px solid #5579a9; background: #d9e8f8; border-radius: 0 0 2px 2px; }
.record { width: 9px; height: 9px; margin: 1px 2px; border: 1px solid #aaa; border-radius: 50%; background: radial-gradient(#ff4d4d, #c00); }
.upload { width: 12px; }
.upload svg { width: 10px; height: 10px; margin: auto; }

.taskbar { flex: none; height: 24px; position: relative; display: flex; align-items: stretch; background: linear-gradient(#a87d54, #b98d63 60%, #a77c53); color: #fff; }
.wood { position: absolute; inset: 0; width: 100%; height: 100%; }
.task { position: relative; width: 35px; display: grid; place-items: center; }
.task svg { width: 18px; height: 18px; }
.start svg { width: 14px; height: 14px; }
.start { width: 28px; }
.folder { width: 34px; }
.chrome { width: 36px; }
.framed { width: 33px; margin-right: 2px; border: 1px solid #d6b999; background: #dac6ac66; }
.current { background: #eee2d4bb; border-color: #eee2d4; }
.task text { font: bold 5px "Liberation Sans", sans-serif; fill: #00a900; text-anchor: middle; }
.tray { position: relative; margin-left: auto; display: flex; align-items: center; gap: 4px; padding-right: 10px; }
.tray svg { width: 10px; height: 10px; }
.up { font-size: 6px; padding-right: 2px; }
.ime { padding-left: 3px; }
.tray time { padding-left: 4px; font: 7px/10px "Open Sans", "Noto Sans CJK TC", sans-serif; text-align: center; }
```
